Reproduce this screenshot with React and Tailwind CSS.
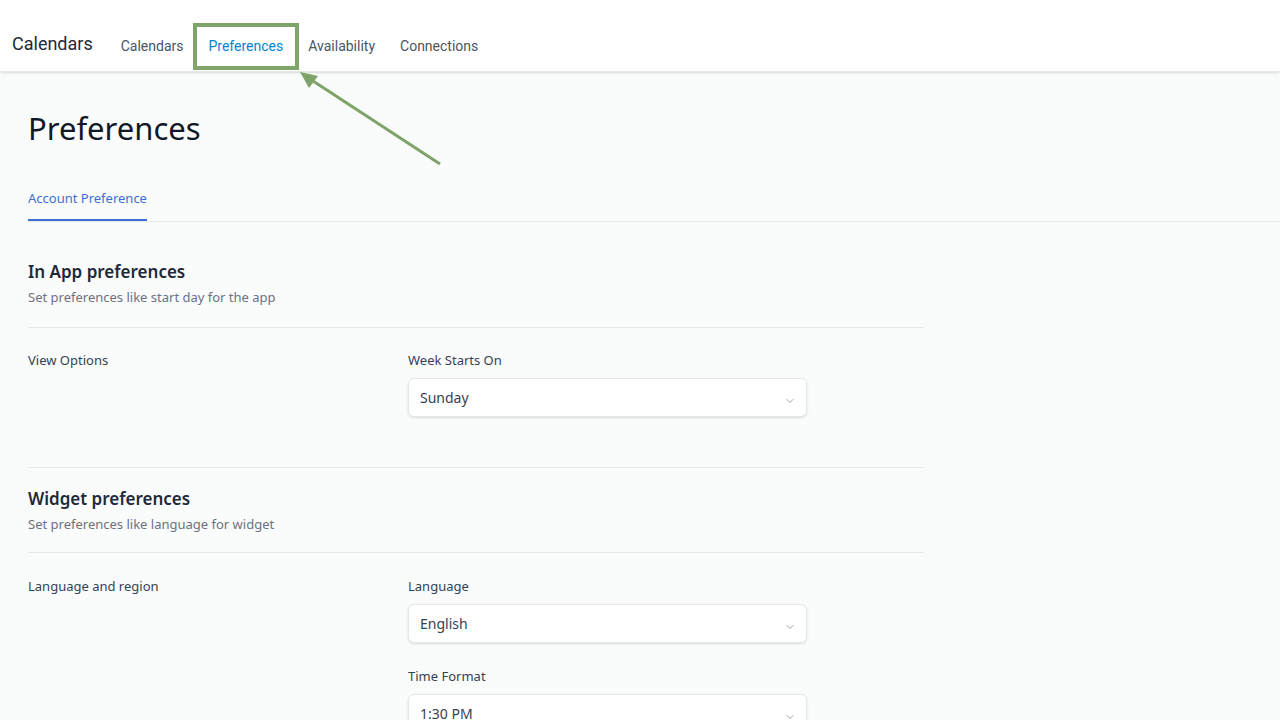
import React from 'react';

const navItems = ['Calendars', 'Preferences', 'Availability', 'Connections'];

const Chevron = () => (
  <svg width="12" height="12" viewBox="0 0 12 12" fill="none" className="text-gray-400">
    <path d="M3 4.5 L6 7.5 L9 4.5" stroke="currentColor" strokeWidth="1" strokeLinecap="round" strokeLinejoin="round" />
  </svg>
);

const Select = ({ value }) => (
  <div className="w-[399px] h-[39px] bg-white border border-gray-200 rounded-md shadow-sm flex items-center justify-between pl-[11px] pr-[10px] text-[14px] text-gray-700">
    <span>{value}</span>
    <span className="mt-2"><Chevron /></span>
  </div>
);

const Field = ({ label, value }) => (
  <div className="flex flex-col">
    <div className="text-[13px] text-gray-700 h-[20px] leading-[20px]">{label}</div>
    <div className="mt-[8px]"><Select value={value} /></div>
  </div>
);

const SectionHead = ({ title, sub, tight }) => (
  <div className={tight ? 'border-b border-gray-200 pb-[18px]' : 'border-b border-gray-200 pb-[20px]'}>
    <div className="text-[17px] font-semibold text-gray-800 leading-[24px]">{title}</div>
    <div className="text-[13px] text-gray-500 leading-[20px] mt-[3px]">{sub}</div>
  </div>
);

export default function App() {
  return (
    <div className="w-[1280px] h-[720px] overflow-hidden bg-[#fafbfb] relative" style={{ fontFamily: '"Noto Sans", "Open Sans", sans-serif' }}>
      {/* top nav */}
      <div className="h-[72px] bg-white border-b border-gray-200 shadow-sm flex items-start px-[12px]" style={{ fontFamily: 'Roboto, sans-serif' }}>
        <div className="text-[18px] text-gray-800 leading-[24px] mt-[32px]">Calendars</div>
        <div className="flex items-center ml-[28px] gap-[25px] text-[14px] text-gray-600 leading-[20px] mt-[36px]">
          {navItems.map((item) => (
            <div key={item} className={item === 'Preferences' ? 'text-sky-600' : ''}>{item}</div>
          ))}
        </div>
      </div>

      {/* highlight box + arrow */}
      <div className="absolute left-[193px] top-[23px] w-[106px] h-[47px] border-4 border-[#7fa46a]" />
      <svg className="absolute left-0 top-0" width="1280" height="720" fill="none">
        <line x1="440" y1="164" x2="310" y2="79" stroke="#7fa46a" strokeWidth="3" />
        <path d="M300 72 L318 76 L309 88 Z" fill="#7fa46a" />
      </svg>

      <div className="px-[28px]">
        <h1 className="text-[31px] text-gray-900 mt-[36px] leading-[40px]">Preferences</h1>

        <div className="mt-[37px] border-b border-gray-200 -mr-[28px]">
          <div className="inline-block text-[13px] text-[#3b6fd4] pb-[10px] border-b-2 border-[#3b6fd4]">Account Preference</div>
        </div>

        <div className="w-[896px]">
          <div className="mt-[38px]">
            <SectionHead title="In App preferences" sub="Set preferences like start day for the app" />
          </div>
          <div className="flex pt-[22px] pb-[50px] border-b border-gray-200">
            <div className="w-[380px] text-[13px] text-gray-700 leading-[20px]">View Options</div>
            <Field label="Week Starts On" value="Sunday" />
          </div>

          <div className="mt-[19px]">
            <SectionHead title="Widget preferences" sub="Set preferences like language for widget" tight />
          </div>
          <div className="flex pt-[23px]">
            <div className="w-[380px] text-[13px] text-gray-700 leading-[20px]">Language and region</div>
            <div className="flex flex-col gap-[23px]">
              <Field label="Language" value="English" />
              <Field label="Time Format" value="1:30 PM" />
            </div>
          </div>
        </div>
      </div>
    </div>
  );
}
